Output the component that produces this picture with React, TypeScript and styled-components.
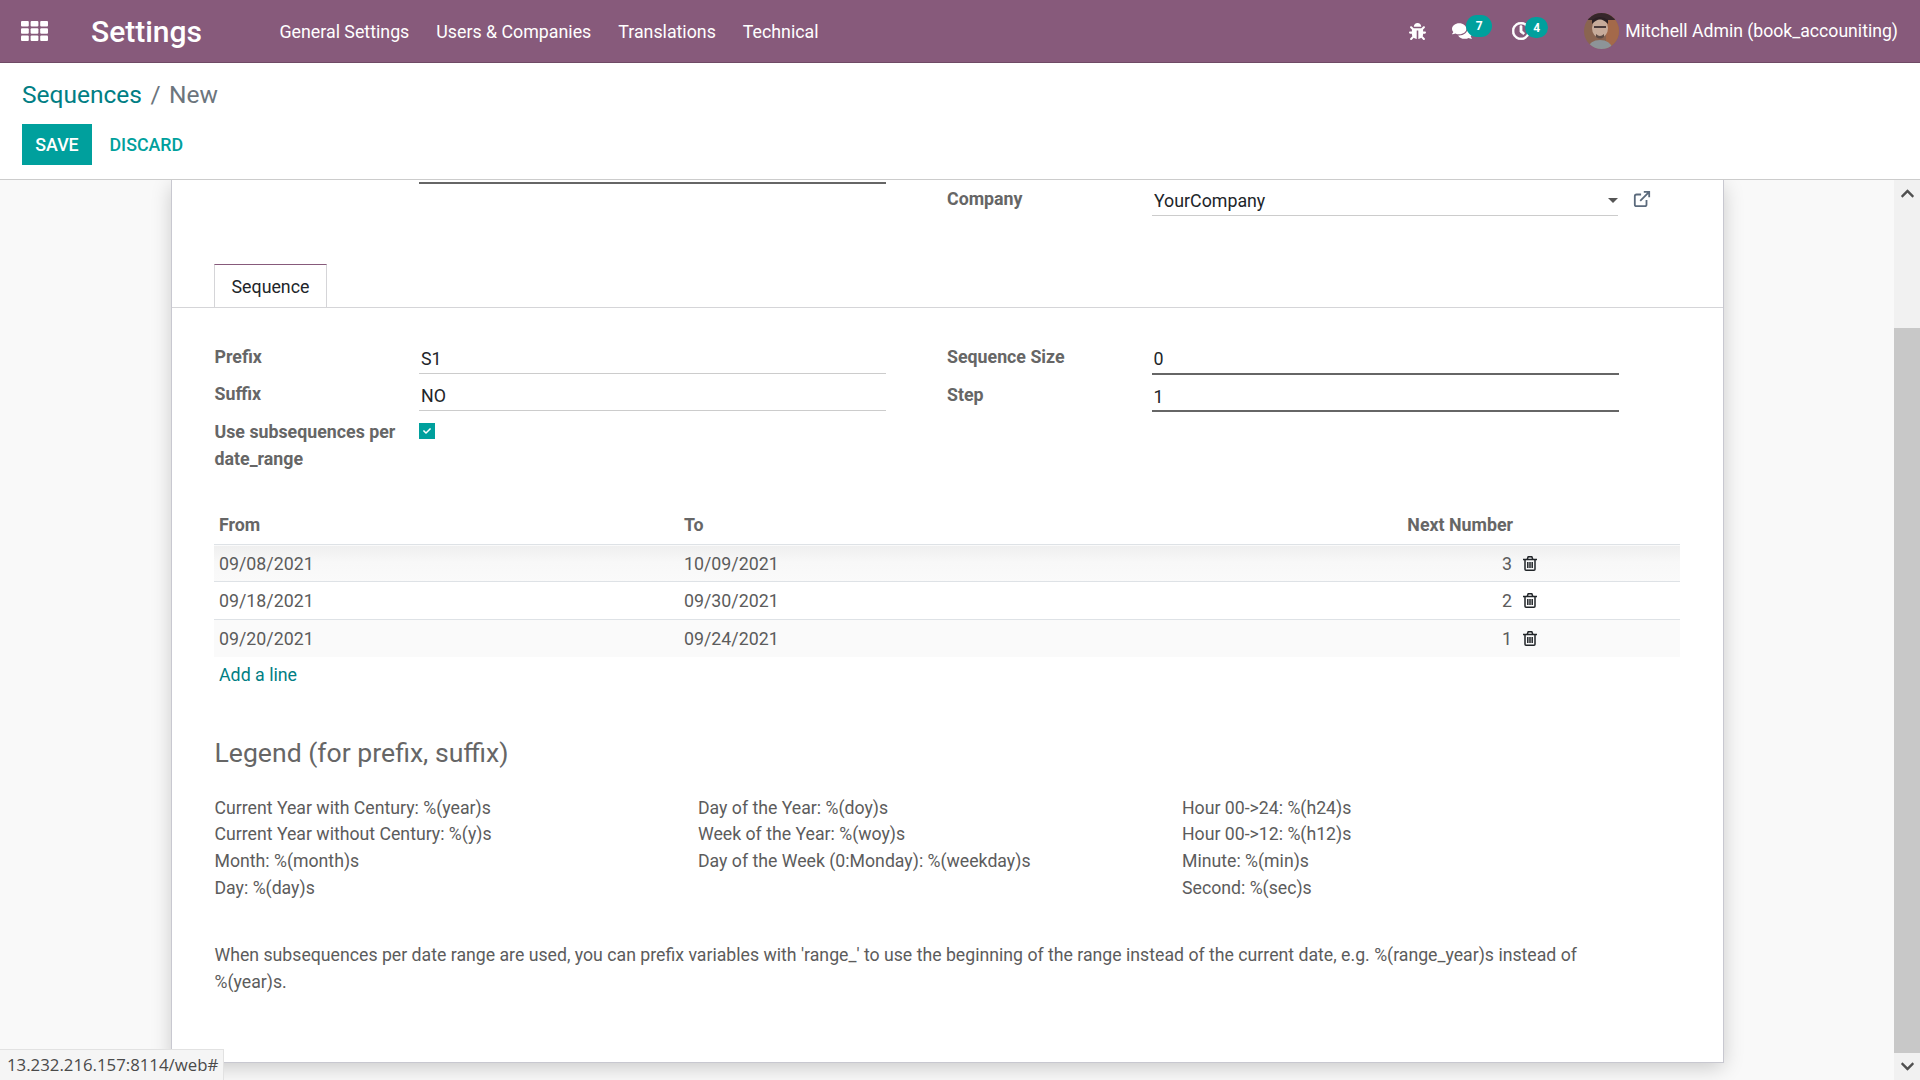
import React from "react";
import styled, { createGlobalStyle } from "styled-components";
import { FaBug, FaComments, FaRegClock, FaCheck, FaChevronUp, FaChevronDown } from "react-icons/fa";

const GlobalStyle = createGlobalStyle`
  html, body { margin: 0; padding: 0; height: 100%; }
  body { font-family: Roboto, "Noto Sans", sans-serif; font-size: 17.8px; color: #4c4c4c; overflow: hidden; }
  #root { height: 100%; }
`;

const Page = styled.div`
  position: relative;
  display: flex;
  flex-direction: column;
  width: 1920px;
  height: 1080px;
  overflow: hidden;
`;

const NavBar = styled.header`
  display: flex;
  align-items: center;
  height: 63px;
  box-sizing: border-box;
  border-bottom: 1px solid #6f4a65;
  background: #875a7b;
  color: #fff;
  flex: none;
`;

const AppsButton = styled.div`
  display: flex;
  margin-left: 21px;
  width: 70px;
`;

const AppsIcon = styled.svg`
  width: 27px;
  height: 20px;
  fill: #fff;
`;

const Brand = styled.div`
  font-size: 30px;
  font-weight: 500;
  width: 188.5px;
  padding-top: 1px;
`;

const MenuList = styled.nav`
  display: flex;
  gap: 27px;
  flex: 1;
`;

const Systray = styled.div`
  display: flex;
  align-items: center;
  height: 100%;
`;

const TrayIcon = styled.div<{ $w: number }>`
  position: relative;
  display: flex;
  align-items: center;
  width: ${(p) => p.$w}px;
  font-size: 17px;
`;

const Badge = styled.span<{ $left: number; $top: number; $w: number; $h: number }>`
  position: absolute;
  left: ${(p) => p.$left}px;
  top: ${(p) => p.$top}px;
  width: ${(p) => p.$w}px;
  height: ${(p) => p.$h}px;
  border-radius: 11px;
  background: #00a09d;
  color: #fff;
  font-size: 12px;
  font-weight: 700;
  display: flex;
  align-items: center;
  justify-content: center;
`;

const UserName = styled.span`
  font-size: 17.65px;
  margin-left: 6px;
  margin-right: 22px;
`;

const ControlPanel = styled.div`
  height: 117px;
  box-sizing: border-box;
  background: #fff;
  border-bottom: 1px solid #ccc;
  padding: 16px 22px 0;
  flex: none;
`;

const Breadcrumb = styled.div`
  display: flex;
  font-size: 24.5px;
  line-height: 32px;
  color: #6c757d;
`;

const CrumbLink = styled.span`
  color: #017e84;
`;

const CrumbSep = styled.span`
  margin: 0 8.5px;
`;

const Buttons = styled.div`
  display: flex;
  align-items: center;
  margin-top: 13px;
`;

const SaveButton = styled.button`
  width: 70px;
  height: 41px;
  border: 0;
  padding: 0;
  background: #00a09d;
  color: #fff;
  font: 500 17.8px Roboto, sans-serif;
`;

const DiscardButton = styled.button`
  border: 0;
  padding: 0;
  margin-left: 17.5px;
  background: none;
  color: #00a09d;
  font: 500 17.8px Roboto, sans-serif;
`;

const Content = styled.div`
  display: flex;
  flex: 1;
  min-height: 0;
`;

const Main = styled.main`
  flex: 1;
  background: #f9f9f9;
  overflow: hidden;
`;

const Sheet = styled.section`
  width: 1553px;
  height: 883px;
  margin-left: 171px;
  box-sizing: border-box;
  background: #fff;
  border: 1px solid #c8c8d0;
  border-top: 0;
  box-shadow: 0 5px 20px -1px rgba(0, 0, 0, 0.2);
`;

const FormColumns = styled.div`
  display: grid;
  grid-template-columns: 671.5px 671px;
  column-gap: 61px;
  padding: 0 42.5px;
`;

const CutField = styled.div`
  margin: 2px 0 0 204.5px;
  height: 2px;
  background: #666;
`;

const CompanyRow = styled.div`
  display: grid;
  grid-template-columns: 205px 466px 36px;
  height: 36px;
`;

const FieldLabel = styled.label`
  font-weight: 700;
  line-height: 27px;
  color: #666;
`;

const CompanyLabel = styled(FieldLabel)`
  padding-top: 5px;
`;

const RowLabel = styled(FieldLabel)`
  padding-top: 6px;
`;

const SelectValue = styled.div`
  display: flex;
  align-items: center;
  justify-content: space-between;
  padding: 5px 2px 0;
  box-sizing: border-box;
  border-bottom: 1px solid #ccc;
  color: #212529;
`;

const Caret = styled.span`
  width: 0;
  height: 0;
  margin-right: -2px;
  border-left: 5px solid transparent;
  border-right: 5px solid transparent;
  border-top: 5px solid #555;
`;

const LinkIcon = styled.svg`
  width: 18px;
  height: 18px;
  margin: 10px 0 0 15px;
  fill: none;
  stroke: #5b6a7c;
  stroke-width: 2;
`;

const TabBar = styled.div`
  margin-top: 48px;
  padding-left: 42px;
  height: 43px;
  border-bottom: 1px solid #d5d5d8;
`;

const Tab = styled.div`
  width: 113px;
  height: 43px;
  box-sizing: border-box;
  background: #fff;
  border: 1px solid #d5d5d8;
  border-top-color: #875a7b;
  border-bottom: 0;
  text-align: center;
  line-height: 43px;
  color: #212529;
`;

const FieldsArea = styled(FormColumns)`
  margin-top: 29px;
`;

const FieldRow = styled.div<{ $h?: number }>`
  display: grid;
  grid-template-columns: 204.5px 467px;
  height: ${(p) => p.$h || 37}px;
`;

const TallRow = styled.div`
  display: grid;
  grid-template-columns: 204.5px 467px;
  padding-top: 7px;
`;

const FieldValue = styled.div<{ $dark?: boolean }>`
  box-sizing: border-box;
  padding: 11px 2px 0;
  border-bottom: ${(p) => (p.$dark ? "2px solid #666" : "1px solid #ccc")};
  color: #212529;
`;

const CheckBox = styled.span`
  display: flex;
  align-items: center;
  justify-content: center;
  width: 16px;
  height: 16px;
  margin-top: 5px;
  background: #00a09d;
  color: #fff;
  font-size: 8px;
`;

const LinesTable = styled.table`
  width: 1466px;
  margin: 32px 0 0 42px;
  border-collapse: collapse;
  table-layout: fixed;
`;

const HeadCell = styled.th<{ $right?: boolean }>`
  height: 40px;
  padding: 0 4px 0 5px;
  text-align: ${(p) => (p.$right ? "right" : "left")};
  font-weight: 700;
  color: #666;
`;

const LineRow = styled.tr<{ $shade?: string }>`
  height: 37px;
  background: ${(p) => p.$shade || "#fff"};
  border-top: 1px solid #dee2e6;

  &:nth-child(2) {
    height: 38px;
  }
`;

const LineCell = styled.td<{ $right?: boolean }>`
  padding: 0 5px;
  text-align: ${(p) => (p.$right ? "right" : "left")};
  color: #5c5c5c;
`;

const TrashCell = styled.td`
  padding: 0 0 0 6px;
  color: #212529;
  line-height: 1;
`;

const TrashIcon = styled.svg`
  display: block;
  width: 14px;
  height: 15px;
  fill: none;
  stroke: #212529;
  stroke-width: 1.5;
`;

const AddLine = styled.a`
  display: block;
  margin: 5px 0 0 47px;
  line-height: 26px;
  color: #017e84;
`;

const LegendTitle = styled.h3`
  margin: 48px 0 0 42.5px;
  font-size: 26.6px;
  line-height: 34px;
  font-weight: 400;
  color: #666;
`;

const LegendGrid = styled.div`
  display: grid;
  grid-template-columns: 483.5px 484px 484px;
  margin: 25px 0 0 42.5px;
  font-size: 17.7px;
  line-height: 26.8px;
  color: #5c5c5c;
`;

const LegendColumn = styled.div`
  display: flex;
  flex-direction: column;
`;

const LegendNote = styled.p`
  width: 1372px;
  margin: 40px 0 0 42.5px;
  font-size: 17.7px;
  line-height: 27px;
  color: #5c5c5c;
`;

const ScrollBar = styled.div`
  display: flex;
  flex-direction: column;
  flex: none;
  width: 26px;
  background: #f1f1f1;
`;

const ScrollArrow = styled.div`
  display: flex;
  align-items: center;
  justify-content: center;
  height: 27px;
  font-size: 15px;
  color: #505050;
`;

const ScrollSpace = styled.div`
  height: 121px;
`;

const ScrollThumb = styled.div`
  flex: 1;
  background: #c8c8c8;
`;

const StatusUrl = styled.div`
  position: absolute;
  left: 0;
  bottom: 0;
  width: 224px;
  height: 31px;
  box-sizing: border-box;
  padding-left: 7px;
  background: #f5f5f5;
  border-top: 1px solid #e2e2e2;
  border-right: 1px solid #e2e2e2;
  font: 16.8px/30px "Open Sans", sans-serif;
  color: #4a4a4a;
`;

const menus = ["General Settings", "Users & Companies", "Translations", "Technical"];

const lines = [
  { from: "09/08/2021", to: "10/09/2021", next: 3, shade: "linear-gradient(#efefef, #f8f8f8 45%, #fafafa)" },
  { from: "09/18/2021", to: "09/30/2021", next: 2 },
  { from: "09/20/2021", to: "09/24/2021", next: 1, shade: "#fafafa" },
];

const legend = [
  ["Current Year with Century: %(year)s", "Current Year without Century: %(y)s", "Month: %(month)s", "Day: %(day)s"],
  ["Day of the Year: %(doy)s", "Week of the Year: %(woy)s", "Day of the Week (0:Monday): %(weekday)s"],
  ["Hour 00->24: %(h24)s", "Hour 00->12: %(h12)s", "Minute: %(min)s", "Second: %(sec)s"],
];

// no photo available, a rough little portrait stands in for it
const Avatar = () => (
  <svg width="35" height="36" viewBox="0 0 35 36">
    <defs>
      <clipPath id="avatar-clip">
        <ellipse cx="17.5" cy="18" rx="17.5" ry="18" />
      </clipPath>
    </defs>
    <g clipPath="url(#avatar-clip)">
      <rect width="35" height="36" fill="#8a6450" />
      <rect x="22" width="13" height="36" fill="#a4694a" />
      <rect width="35" height="7" fill="#35262a" />
      <ellipse cx="16" cy="15" rx="8" ry="10" fill="#c7ab9a" />
      <path d="M8 11 Q16 2 24 11 L24 7 Q16 1 8 7Z" fill="#2b2024" />
      <rect x="10" y="13" width="12" height="2" fill="#4a3a3a" />
      <path d="M12 21 Q16 25 20 21 L20 24 Q16 27 12 24Z" fill="#5c4a44" />
      <path d="M3 36 Q6 27 16 27 Q26 27 29 36Z" fill="#8d9498" />
    </g>
  </svg>
);

const Trash = () => (
  <TrashIcon viewBox="0 0 14 15">
    <path d="M0 3.5h14M4.2 3.2l1-2.4h3.6l1 2.4" />
    <path d="M2 3.5v9.7c0 .6.4 1 1 1h8c.6 0 1-.4 1-1V3.5" />
    <path d="M4.8 6v6M7 6v6M9.2 6v6" />
  </TrashIcon>
);

export default function App() {
  return (
    <Page>
      <GlobalStyle />
      <NavBar>
        <AppsButton>
          <AppsIcon viewBox="0 0 27 20">
            {[0, 1, 2].map((r) =>
              [0, 1, 2].map((c) => <rect key={`${r}${c}`} x={c * 9.6} y={r * 7.2} width="7.8" height="5.6" rx="1" />)
            )}
          </AppsIcon>
        </AppsButton>
        <Brand>Settings</Brand>
        <MenuList>
          {menus.map((m) => (
            <span key={m}>{m}</span>
          ))}
        </MenuList>
        <Systray>
          <TrayIcon $w={43}>
            <FaBug />
          </TrayIcon>
          <TrayIcon $w={60}>
            <FaComments size={20} />
            <Badge $left={14} $top={-6} $w={26} $h={22}>7</Badge>
          </TrayIcon>
          <TrayIcon $w={72}>
            <FaRegClock size={18} stroke="currentColor" strokeWidth={24} />
            <Badge $left={13} $top={-5} $w={23} $h={21}>4</Badge>
          </TrayIcon>
          <Avatar />
          <UserName>Mitchell Admin (book_accouniting)</UserName>
        </Systray>
      </NavBar>
      <ControlPanel>
        <Breadcrumb>
          <CrumbLink>Sequences</CrumbLink>
          <CrumbSep>/</CrumbSep>
          New
        </Breadcrumb>
        <Buttons>
          <SaveButton>SAVE</SaveButton>
          <DiscardButton>DISCARD</DiscardButton>
        </Buttons>
      </ControlPanel>
      <Content>
        <Main>
          <Sheet>
            <FormColumns>
              <CutField />
              <CompanyRow>
                <CompanyLabel>Company</CompanyLabel>
                <SelectValue>
                  YourCompany
                  <Caret />
                </SelectValue>
                <LinkIcon viewBox="0 0 20 20">
                  <path d="M15 11v5a2 2 0 0 1-2 2H4a2 2 0 0 1-2-2V7a2 2 0 0 1 2-2h5" />
                  <path d="M8 12 18 2M12 2h6v6" />
                </LinkIcon>
              </CompanyRow>
            </FormColumns>
            <TabBar>
              <Tab>Sequence</Tab>
            </TabBar>
            <FieldsArea>
              <div>
                <FieldRow>
                  <RowLabel>Prefix</RowLabel>
                  <FieldValue>S1</FieldValue>
                </FieldRow>
                <FieldRow>
                  <RowLabel>Suffix</RowLabel>
                  <FieldValue>NO</FieldValue>
                </FieldRow>
                <TallRow>
                  <FieldLabel>
                    Use subsequences per
                    <br />
                    date_range
                  </FieldLabel>
                  <div>
                    <CheckBox>
                      <FaCheck />
                    </CheckBox>
                  </div>
                </TallRow>
              </div>
              <div>
                <FieldRow $h={38}>
                  <RowLabel>Sequence Size</RowLabel>
                  <FieldValue $dark>0</FieldValue>
                </FieldRow>
                <FieldRow>
                  <RowLabel>Step</RowLabel>
                  <FieldValue $dark>1</FieldValue>
                </FieldRow>
              </div>
            </FieldsArea>
            <LinesTable>
              <colgroup>
                <col width="465" />
                <col width="421" />
                <col width="417" />
                <col width="163" />
              </colgroup>
              <thead>
                <tr>
                  <HeadCell>From</HeadCell>
                  <HeadCell>To</HeadCell>
                  <HeadCell $right>Next Number</HeadCell>
                  <HeadCell />
                </tr>
              </thead>
              <tbody>
                {lines.map((l) => (
                  <LineRow key={l.from} $shade={l.shade}>
                    <LineCell>{l.from}</LineCell>
                    <LineCell>{l.to}</LineCell>
                    <LineCell $right>{l.next}</LineCell>
                    <TrashCell>
                      <Trash />
                    </TrashCell>
                  </LineRow>
                ))}
              </tbody>
            </LinesTable>
            <AddLine>Add a line</AddLine>
            <LegendTitle>Legend (for prefix, suffix)</LegendTitle>
            <LegendGrid>
              {legend.map((col) => (
                <LegendColumn key={col[0]}>
                  {col.map((t) => (
                    <span key={t}>{t}</span>
                  ))}
                </LegendColumn>
              ))}
            </LegendGrid>
            <LegendNote>
              When subsequences per date range are used, you can prefix variables with 'range_' to use the beginning of
              the range instead of the current date, e.g. %(range_year)s instead of %(year)s.
            </LegendNote>
          </Sheet>
        </Main>
        <ScrollBar>
          <ScrollArrow>
            <FaChevronUp />
          </ScrollArrow>
          <ScrollSpace />
          <ScrollThumb />
          <ScrollArrow>
            <FaChevronDown />
          </ScrollArrow>
        </ScrollBar>
      </Content>
      <StatusUrl>13.232.216.157:8114/web#</StatusUrl>
    </Page>
  );
}
